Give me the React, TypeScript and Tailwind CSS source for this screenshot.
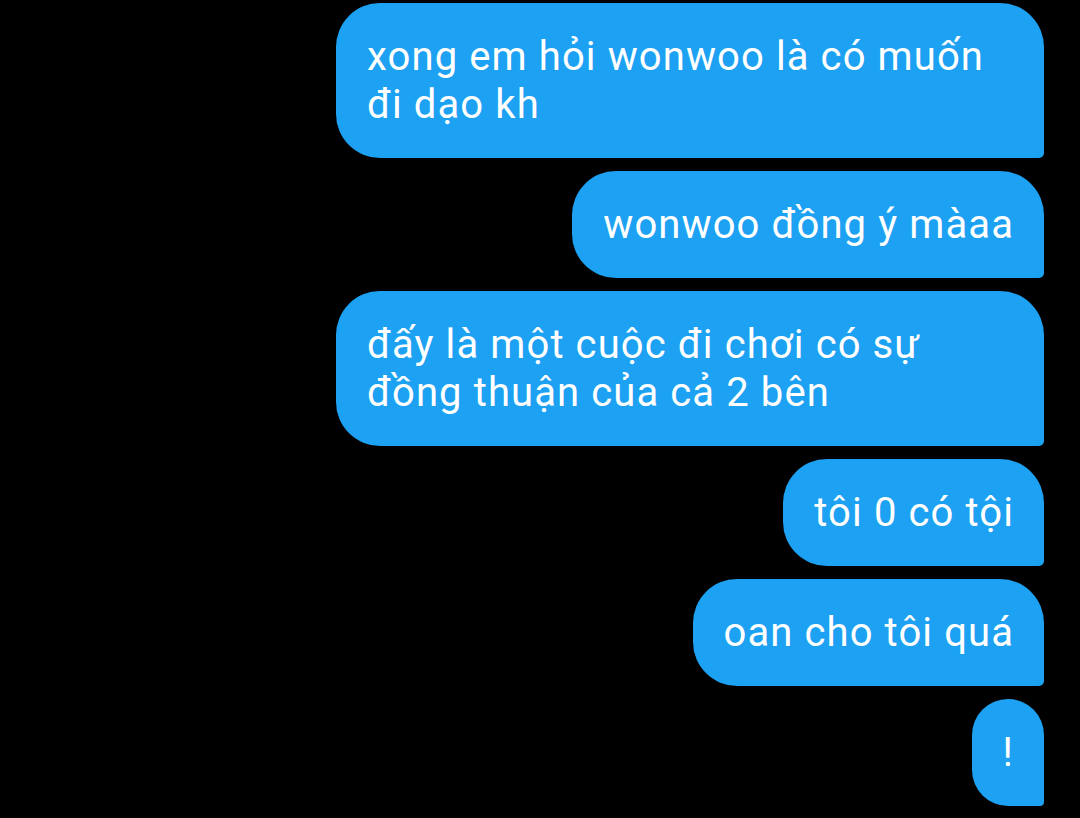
import React from "react";

const messages = [
  "xong em hỏi wonwoo là có muốn đi dạo kh",
  "wonwoo đồng ý màaa",
  "đấy là một cuộc đi chơi có sự đồng thuận của cả 2 bên",
  "tôi 0 có tội",
  "oan cho tôi quá",
  "!",
];

export default function App() {
  return (
    <div
      className="w-[1080px] h-[818px] bg-black overflow-hidden flex flex-col items-end gap-[13px] pt-[3px] pr-[36px]"
      style={{ fontFamily: "Roboto, 'Noto Sans', sans-serif" }}
    >
      {messages.map((m, i) => (
        <div
          key={i}
          className="max-w-[708px] bg-[#1da1f2] text-white text-[40px] leading-[48px] tracking-[1.1px] pl-[31px] pr-[30px] py-[29.5px] rounded-tl-[44px] rounded-tr-[44px] rounded-bl-[44px] rounded-br-[5px]"
        >
          {m}
        </div>
      ))}
    </div>
  );
}
